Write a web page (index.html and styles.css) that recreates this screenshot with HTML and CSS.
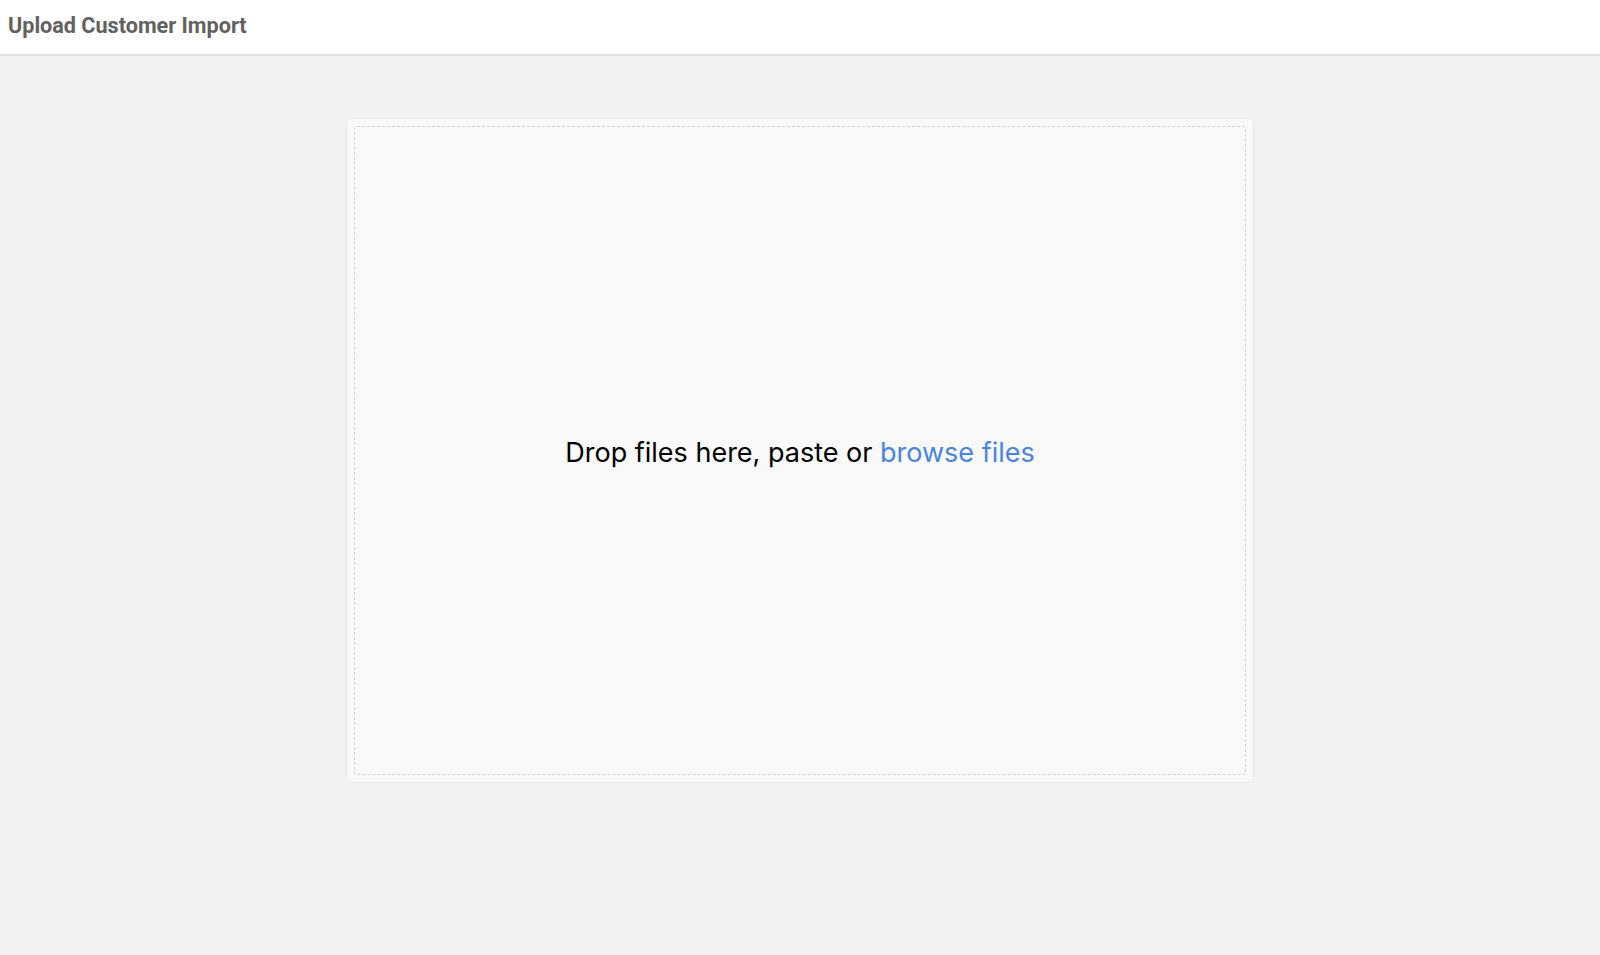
FILE: index.html
```html
<!DOCTYPE html>
<html>
<head>
    <meta charset="utf-8">
    <title>Upload Customer Import</title>
    <link rel="stylesheet" href="styles.css">
</head>
<body>
    <header class="header">
        <h1 class="title">Upload Customer Import</h1>
    </header>

    <main class="content">
        <div class="uploader">
            <div class="dropzone">
                <p class="drop-text">Drop files here, paste or <a class="browse-link">browse files</a></p>
            </div>
        </div>
    </main>
</body>
</html>
```

FILE: styles.css
```css
html, body {
    margin: 0;
    height: 100%;
}

body {
    background-color: #f2f2f2;
    font-family: Inter, "Noto Sans", sans-serif;
    display: flex;
    flex-direction: column;
}

.header {
    background-color: white;
    height: 56px;
    border-bottom: 2px solid #dedede;
    display: flex;
    align-items: center;
    padding-left: 8px;
    padding-bottom: 4px;
    box-sizing: border-box;
}

.title {
    margin: 0;
    font-family: Roboto, sans-serif;
    font-size: 21.6px;
    font-weight: bold;
    color: #616161;
}

.content {
    flex: 1;
    display: flex;
    justify-content: center;
    padding-top: 62px;
}

.uploader {
    width: 908px;
    height: 665px;
    box-sizing: border-box;
    background-color: #f9f9f9;
    border: 1px solid #e8e8e8;
    border-radius: 5px;
    padding: 7px;
}

.dropzone {
    height: 100%;
    box-sizing: border-box;
    border: 1px dashed #d4d4d4;
    border-radius: 3px;
    display: flex;
    align-items: center;
    justify-content: center;
}

.drop-text {
    margin: 0;
    padding-top: 4px;
    font-size: 27px;
    color: #000;
}

.browse-link {
    color: #4a85dd;
    cursor: pointer;
}
```
